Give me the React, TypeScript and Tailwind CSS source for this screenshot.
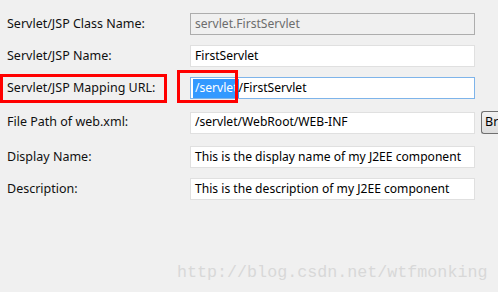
import React from "react";

const font = { fontFamily: '"Noto Sans", "Open Sans", sans-serif' };

function Field({
  label,
  value,
  disabled,
  focused,
  top,
  children,
}: {
  label: string;
  value?: React.ReactNode;
  disabled?: boolean;
  focused?: boolean;
  top: string;
  children?: React.ReactNode;
}) {
  const box = disabled
    ? "border-[#adadad] bg-[#f0f0f0] text-[#6d6d6d]"
    : focused
    ? "border-[#7eb4ea] bg-white text-black"
    : "border-[#e0e0e0] bg-white text-black";
  return (
    <div className={`flex items-center ${top}`}>
      <div className="w-[190px] shrink-0 pl-[7px] text-[12.5px] text-[#111]">{label}</div>
      <div
        className={`flex h-[22px] w-[285px] shrink-0 items-center border px-[4px] text-[12.1px] leading-none ${box}`}
      >
        {value}
      </div>
      {children}
    </div>
  );
}

export default function App() {
  return (
    <div className="relative h-[292px] w-[498px] overflow-hidden bg-[#f0f0f0]" style={font}>
      <div className="flex flex-col">
        <Field top="mt-[13px]" label="Servlet/JSP Class Name:" value="servlet.FirstServlet" disabled />
        <Field top="mt-[10px]" label="Servlet/JSP Name:" value="FirstServlet" />
        <Field
          top="mt-[10px]"
          label="Servlet/JSP Mapping URL:"
          focused
          value={
            <span className="flex items-center">
              <span className="-ml-[2px] flex h-[19px] items-center bg-[#3399ff] pl-[2px] pr-[1px] text-white">/servlet</span>
              <span>/FirstServlet</span>
            </span>
          }
        />
        <Field top="mt-[12px]" label="File Path of web.xml:" value="/servlet/WebRoot/WEB-INF">
          <div className="ml-[6px] flex h-[23px] w-[17px] shrink-0 items-center overflow-hidden rounded-l-[3px] border border-r-0 border-[#707070] bg-gradient-to-b from-[#f2f2f2] to-[#dddddd] pl-[3px] text-[12.5px] text-black">
            Br
          </div>
        </Field>
        <Field top="mt-[12px]" label="Display Name:" value="This is the display name of my J2EE component" />
        <Field top="mt-[10px]" label="Description:" value="This is the description of my J2EE component" />
      </div>

      {/* red annotation boxes */}
      <div className="absolute left-0 top-[74px] h-[29px] w-[167px] border-[3px] border-[#ff0000]" />
      <div className="absolute left-[177px] top-[70px] h-[33px] w-[61px] border-[3px] border-[#ff0000]" />

      {/* watermark */}
      <div
        className="absolute left-[177px] top-[265px] text-[16.7px] leading-none text-[#d8d8d8]"
        style={{ fontFamily: '"Liberation Mono", monospace' }}
      >
        http://blog.csdn.net/wtfmonking
      </div>
    </div>
  );
}
